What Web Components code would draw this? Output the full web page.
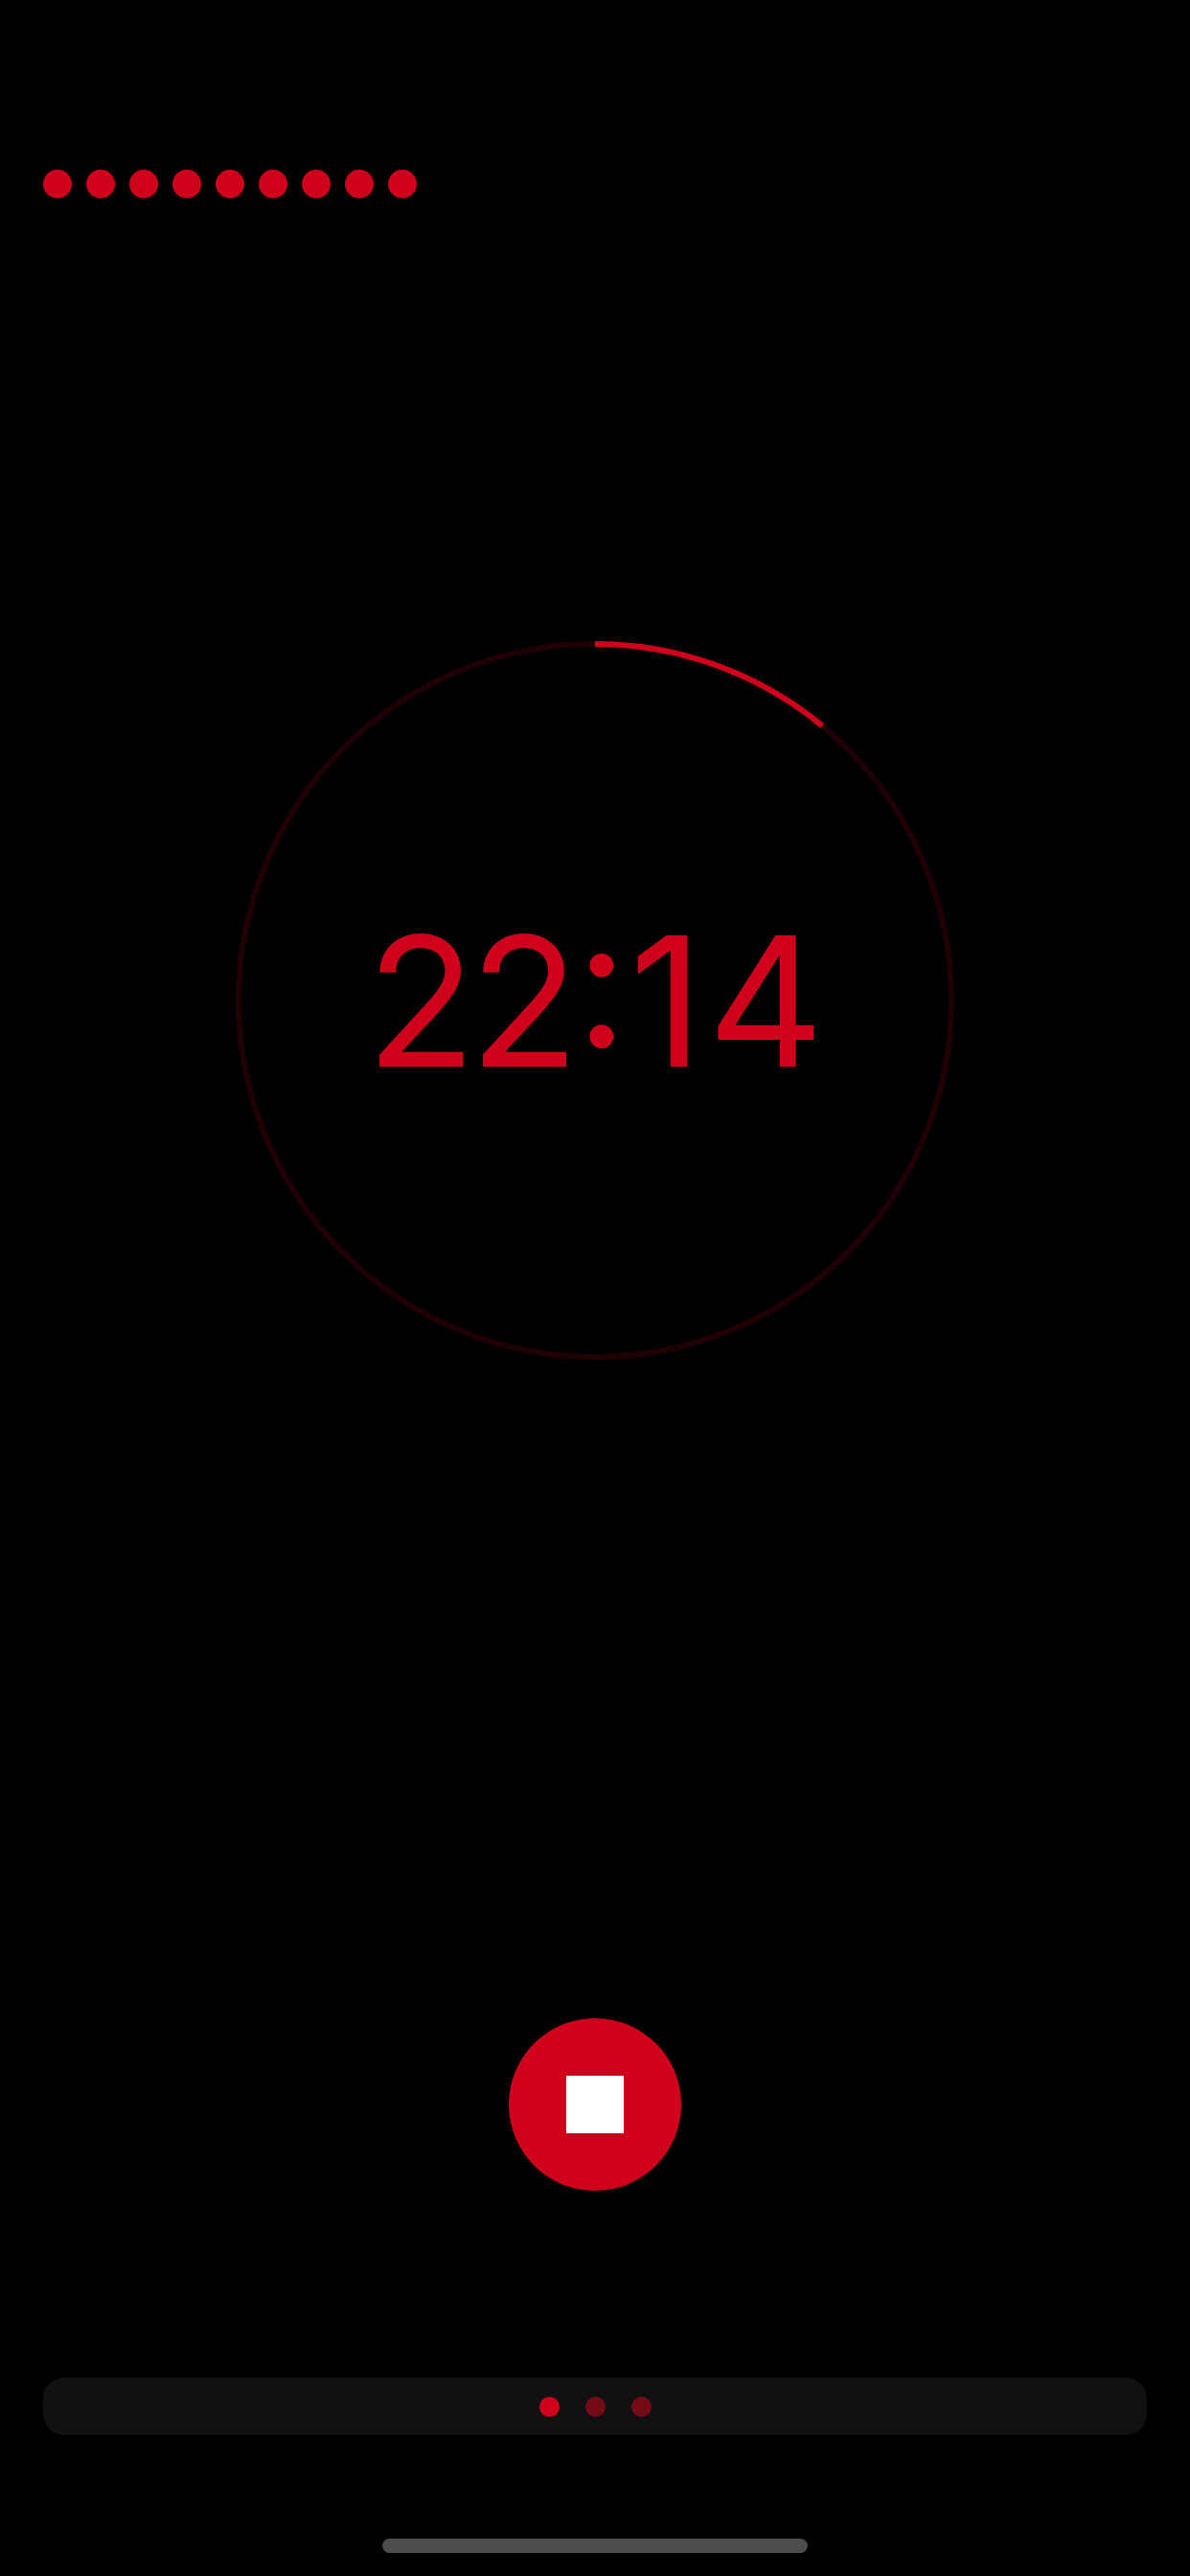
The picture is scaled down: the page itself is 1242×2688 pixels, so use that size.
<!DOCTYPE html>
<html>
<head>
<meta charset="utf-8">
<title>Timer</title>
<style>
  html, body { margin: 0; background: #000; }
</style>
</head>
<body>
<focus-screen>
  <round-dots slot="rounds" count="9"></round-dots>
  <timer-ring slot="timer" progress="0.11"><span style="letter-spacing:-7px">2</span><span style="letter-spacing:-3.5px">2</span><span style="letter-spacing:2px">:</span><span style="letter-spacing:5px">1</span><span>4</span></timer-ring>
  <stop-button slot="action"></stop-button>
  <page-dots slot="pager" count="3"></page-dots>
</focus-screen>

<script>
const RED = "#d0011b";

class FocusScreen extends HTMLElement {
    constructor() {
        super();
        this.attachShadow({ mode: "open" });
        this.shadowRoot.innerHTML = `
          <style>
            :host {
                display: flex;
                flex-direction: column;
                width: 1242px;
                height: 2688px;
                background: #000;
                box-sizing: border-box;
                padding-top: 177px;
                overflow: hidden;
            }
            #rounds { display: block; padding-left: 45px; }
            #timer { display: flex; justify-content: center; margin-top: 462px; }
            #action { display: flex; justify-content: center; margin-top: 687px; }
            #pager { display: block; margin: 195px 45px 0; }
            #home {
                width: 444px;
                height: 15px;
                margin: 108px auto 0;
                border-radius: 8px;
                background: #4d4d4d;
            }
          </style>
          <div id="rounds"><slot name="rounds"></slot></div>
          <div id="timer"><slot name="timer"></slot></div>
          <div id="action"><slot name="action"></slot></div>
          <div id="pager"><slot name="pager"></slot></div>
          <div id="home"></div>
        `;
    }
}

class RoundDots extends HTMLElement {
    constructor() {
        super();
        this.attachShadow({ mode: "open" });
    }

    connectedCallback() {
        const count = Number(this.getAttribute("count"));
        this.shadowRoot.innerHTML = `
          <style>
            :host { display: flex; gap: 15px; }
            i { width: 30px; height: 30px; border-radius: 50%; background: ${RED}; }
          </style>
          ${"<i></i>".repeat(count)}
        `;
    }
}

class TimerRing extends HTMLElement {
    constructor() {
        super();
        this.attachShadow({ mode: "open" });
    }

    connectedCallback() {
        const radius = 372;
        const length = 2 * Math.PI * radius;
        const done = length * Number(this.getAttribute("progress"));
        this.shadowRoot.innerHTML = `
          <style>
            :host {
                display: grid;
                width: 750px;
                height: 750px;
            }
            svg, #time { grid-area: 1 / 1; }
            circle { fill: none; stroke-width: 6; }
            #track { stroke: #1f0105; }
            #done { stroke: ${RED}; }
            #time {
                align-self: center;
                justify-self: center;
                font-family: Inter, "Liberation Sans", sans-serif;
                font-weight: 400;
                font-size: 188px;
                font-feature-settings: "case";
                color: ${RED};
                white-space: nowrap;
            }
          </style>
          <svg width="750" height="750" viewBox="0 0 750 750">
            <circle id="track" cx="375" cy="375" r="${radius}"></circle>
            <circle id="done" cx="375" cy="375" r="${radius}"
              stroke-dasharray="${done} ${length}"
              transform="rotate(-90 375 375)"></circle>
          </svg>
          <div id="time"><slot></slot></div>
        `;
    }
}

class StopButton extends HTMLElement {
    constructor() {
        super();
        this.attachShadow({ mode: "open" });
        this.shadowRoot.innerHTML = `
          <style>
            :host {
                display: flex;
                align-items: center;
                justify-content: center;
                width: 180px;
                height: 180px;
                border-radius: 50%;
                background: ${RED};
            }
            i { width: 60px; height: 60px; background: #fff; }
          </style>
          <i></i>
        `;
    }
}

class PageDots extends HTMLElement {
    constructor() {
        super();
        this.attachShadow({ mode: "open" });
    }

    connectedCallback() {
        const count = Number(this.getAttribute("count"));
        this.shadowRoot.innerHTML = `
          <style>
            :host {
                display: flex;
                align-items: center;
                justify-content: center;
                gap: 27px;
                height: 60px;
                border-radius: 22px;
                background: #111;
            }
            i { width: 21px; height: 21px; border-radius: 50%; background: #740b18; }
            i:first-of-type { background: ${RED}; }
          </style>
          ${"<i></i>".repeat(count)}
        `;
    }
}

customElements.define("focus-screen", FocusScreen);
customElements.define("round-dots", RoundDots);
customElements.define("timer-ring", TimerRing);
customElements.define("stop-button", StopButton);
customElements.define("page-dots", PageDots);
</script>
</body>
</html>
